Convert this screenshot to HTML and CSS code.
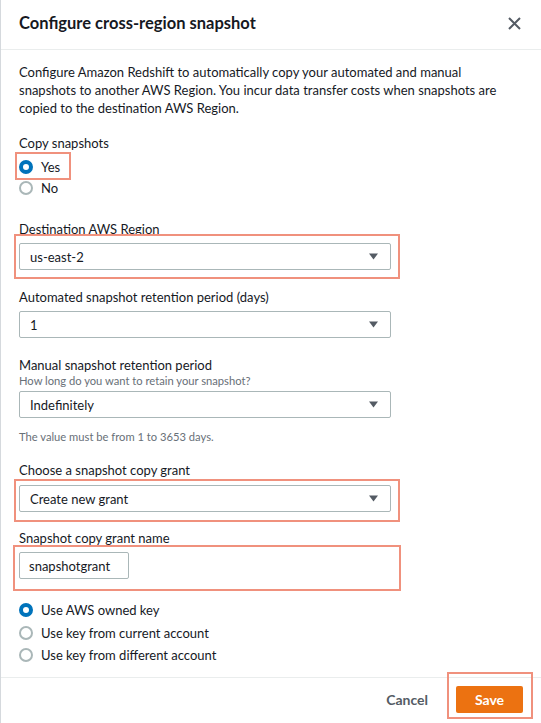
FILE: index.html
```html
<!DOCTYPE html>
<html lang="en">
<head>
<meta charset="utf-8">
<title>Configure cross-region snapshot</title>
<link rel="stylesheet" href="styles.css">
</head>
<body>
<div class="modal">
  <header class="head">
    <h2 class="title">Configure cross-region snapshot</h2>
    <button class="close" aria-label="Close">
      <svg width="13" height="13" viewBox="0 0 13 13"><path d="M1 1L12 12M12 1L1 12" stroke="#545b64" stroke-width="2" fill="none"/></svg>
    </button>
  </header>
  <main class="content">
    <p class="intro">Configure Amazon Redshift to automatically copy your automated and manual snapshots to another AWS Region. You incur data transfer costs when snapshots are copied to the destination AWS Region.</p>

    <div class="field f-copy">
      <div class="label">Copy snapshots</div>
      <div class="radios radios-copy">
        <div class="hl hl-yes"><label class="radio"><span class="dot on"></span>Yes</label></div>
        <label class="radio radio-no"><span class="dot"></span>No</label>
      </div>
    </div>

    <div class="field f-dest">
      <div class="label">Destination AWS Region</div>
      <div class="select hl hl-dest"><span>us-east-2</span><svg class="caret" width="9" height="7" viewBox="0 0 9 7"><path d="M0 0.5H9L4.5 6.5Z" fill="#545b64"/></svg></div>
    </div>

    <div class="field f-auto">
      <div class="label">Automated snapshot retention period (days)</div>
      <div class="select"><span>1</span><svg class="caret" width="9" height="7" viewBox="0 0 9 7"><path d="M0 0.5H9L4.5 6.5Z" fill="#545b64"/></svg></div>
    </div>

    <div class="field f-manual">
      <div class="label">Manual snapshot retention period</div>
      <div class="hint">How long do you want to retain your snapshot?</div>
      <div class="select sel-manual"><span>Indefinitely</span><svg class="caret" width="9" height="7" viewBox="0 0 9 7"><path d="M0 0.5H9L4.5 6.5Z" fill="#545b64"/></svg></div>
      <div class="constraint">The value must be from 1 to 3653 days.</div>
    </div>

    <div class="field f-grant">
      <div class="label">Choose a snapshot copy grant</div>
      <div class="select hl hl-grant"><span>Create new grant</span><svg class="caret" width="9" height="7" viewBox="0 0 9 7"><path d="M0 0.5H9L4.5 6.5Z" fill="#545b64"/></svg></div>
    </div>

    <div class="field f-name">
      <div class="label">Snapshot copy grant name</div>
      <div class="input-wrap hl hl-name"><div class="input">snapshotgrant</div></div>
    </div>

    <div class="radios radios-key">
      <label class="radio"><span class="dot on"></span>Use AWS owned key</label>
      <label class="radio"><span class="dot"></span>Use key from current account</label>
      <label class="radio"><span class="dot"></span>Use key from different account</label>
    </div>
  </main>
  <footer class="foot">
    <button class="btn-link">Cancel</button>
    <button class="btn-primary hl hl-save">Save</button>
  </footer>
</div>
</body>
</html>
```

FILE: styles.css
```css
* { box-sizing: border-box; }
html, body { margin: 0; padding: 0; background: #ffffff; }
body {
  font-family: Lato, "Liberation Sans", Arial, sans-serif;
  color: #16191f;
  font-size: 13px;
}
.modal {
  width: 541px;
  height: 723px;
  border-left: 1px solid #d5d9dd;
  display: flex;
  flex-direction: column;
}
.head {
  height: 50px;
  border-bottom: 1px solid #eaeded;
  display: flex;
  align-items: center;
  justify-content: space-between;
  padding: 0 20px 3px 18px;
}
.title {
  margin: 0;
  font-size: 16.5px;
  font-weight: 700;
  color: #16191f;
}
.close {
  border: 0;
  background: none;
  padding: 0;
  width: 13px;
  height: 13px;
  display: flex;
  margin-top: 1px;
}
.content {
  padding: 0 19px 0 18px;
  flex: 1;
}
.intro {
  margin: 13px 0 0;
  max-width: 490px;
  line-height: 18px;
  font-size: 13px;
}
.label { line-height: 18px; }
.hl { position: relative; }
.hl::after {
  content: "";
  position: absolute;
  border: 2px solid #f0917d;
  pointer-events: none;
}
.f-copy { margin-top: 17px; }
.radios { display: flex; flex-direction: column; align-items: flex-start; }
.radios-copy { margin-top: 5px; }
.radio {
  display: flex;
  align-items: center;
  gap: 8px;
  line-height: 20px;
}
.radio-no { margin-top: 1px; }
.dot {
  width: 14px;
  height: 14px;
  border-radius: 50%;
  border: 2px solid #aab7b8;
  background: #ffffff;
  flex: none;
}
.dot.on { border: 4.5px solid #0073bb; }
.hl-yes::after { top: -5px; bottom: -3px; left: -4px; right: -11px; }

.select {
  width: 372px;
  height: 27px;
  border: 1px solid #aab7b8;
  border-radius: 2px;
  display: flex;
  align-items: center;
  justify-content: space-between;
  padding: 0 12px 0 10px;
  margin-top: 5px;
}
.caret { display: block; }
.f-dest { margin-top: 22px; }
.hl-dest::after { top: -10px; bottom: -10px; left: -6px; right: -10px; }
.f-auto { margin-top: 18px; }
.f-manual { margin-top: 18px; }
.hint {
  font-size: 11.2px;
  line-height: 14px;
  color: #687078;
}
.select.sel-manual { margin-top: 3px; }
.constraint {
  margin-top: 11px;
  font-size: 11.2px;
  line-height: 16px;
  color: #687078;
}
.f-grant { margin-top: 16px; }
.f-grant .select { margin-top: 6px; }
.hl-grant::after { top: -7px; bottom: -11px; left: -6px; right: -10px; }
.f-name { margin-top: 17px; }
.input-wrap { width: 372px; margin-top: 5px; }
.input {
  width: 110px;
  height: 27px;
  border: 1px solid #aab7b8;
  border-radius: 2px;
  padding: 0 9px;
  display: flex;
  align-items: center;
}
.hl-name::after { top: -7px; bottom: -12px; left: -6px; right: -10px; }
.radios-key { margin-top: 20px; }
.radios-key .radio { line-height: 22.5px; }

.foot {
  border-top: 1px solid #eaeded;
  height: 46px;
  display: flex;
  justify-content: flex-end;
  align-items: flex-start;
  padding: 8px 18px 0 0;
}
.btn-link {
  border: 0;
  background: none;
  font-family: inherit;
  font-size: 14px;
  font-weight: 700;
  color: #545b64;
  padding: 0;
  height: 27px;
  margin-right: 28px;
}
.btn-primary {
  border: 0;
  background: #ec7211;
  color: #ffffff;
  font-family: inherit;
  font-size: 14px;
  font-weight: 700;
  width: 67px;
  height: 27px;
  border-radius: 2px;
  padding: 0;
}
.hl-save::after { top: -14px; bottom: -6px; left: -9px; right: -10px; }
```
